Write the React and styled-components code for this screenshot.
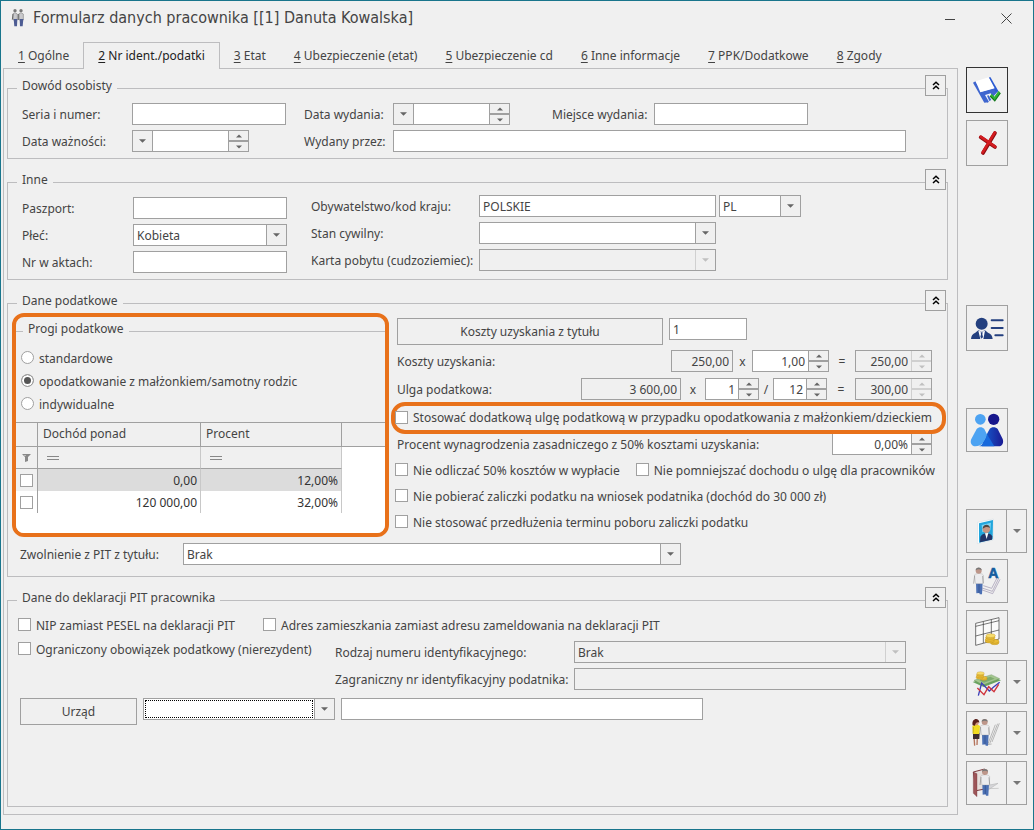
import React, { useState } from 'react';
import styled, { createGlobalStyle, css } from 'styled-components';

const GlobalStyle = createGlobalStyle`
  * {
    box-sizing: border-box;
  }

  body {
    margin: 0;
    background: #f0f0f0;
  }

  body, button, input, select {
    font-family: 'Noto Sans', 'Open Sans', sans-serif;
    font-size: 12px;
    line-height: 16px;
    color: #444;
  }
`;

const line = '#a0a0a0';
const softLine = '#bdbdbf';
const accent = '#e8711a';

const Window = styled.div`
  display: flex;
  flex-direction: column;
  min-height: 100vh;
  border: 1px solid #19758c;
  background: #f0f0f0;
`;

const TitleBar = styled.header`
  display: flex;
  align-items: center;
  height: 34px;
  padding: 0 21px 0 10px;
`;

const Title = styled.h1`
  flex: 1;
  margin: 0 0 0 8px;
  font-family: 'DejaVu Sans Condensed', 'Noto Sans', sans-serif;
  font-size: 16px;
  line-height: 20px;
  font-weight: 400;
`;

const WindowButton = styled.button`
  display: flex;
  width: 12px;
  height: 20px;
  margin-left: 44px;
  padding: 0;
  border: 0;
  background: none;
  align-items: center;
  justify-content: center;
`;

const Content = styled.div`
  display: flex;
  flex: 1;
  gap: 8px;
  padding: 7px 5px 14px 2px;
`;

const Main = styled.main`
  display: flex;
  flex: 1;
  flex-direction: column;
  min-width: 0;
`;

const TabBar = styled.nav`
  display: flex;
  padding-left: 1px;
  height: 27px;
  margin-bottom: -1px;
`;

const Tab = styled.button`
  position: relative;
  padding: 0 14px;
  border: 0;
  background: #f0f0f0;
  white-space: nowrap;

  ${props => props.$active ? css`
    color: #222;
    border: 1px solid ${softLine};
    border-bottom: 0;
  ` : css`
    height: 26px;
    padding-top: 2px;
  `}

  u {
    text-underline-offset: 2px;
  }
`;

const Panel = styled.div`
  display: flex;
  flex: 1;
  flex-direction: column;
  gap: 10px;
  padding: 6px 9px 7px 3px;
  border: 1px solid ${softLine};
`;

const GroupWrap = styled.section`
  position: relative;
  display: flex;
  flex: ${props => props.$grow ? 1 : 'none'};
  padding-top: 4px;
`;

const Fieldset = styled.fieldset`
  flex: 1;
  min-width: 0;
  margin: 0;
  padding: 0 0 6px;
  border: 1px solid ${softLine};
`;

const Legend = styled.legend`
  margin-left: 9px;
  padding: 0 5px 6px;
  line-height: 13px;
`;

const CollapseButton = styled.button`
  position: absolute;
  top: 0;
  right: 2px;
  display: flex;
  align-items: center;
  justify-content: center;
  width: 21px;
  height: 21px;
  padding: 0;
  border: 1px solid ${line};
  background: #f0f0f0;
`;

const Stack = styled.div`
  display: flex;
  flex-direction: column;
  gap: ${props => props.$gap || 5}px;
  padding: ${props => props.$pad || 0};
`;

const Row = styled.div`
  display: flex;
  align-items: ${props => props.$top ? 'flex-start' : 'center'};
  gap: ${props => props.$gap || 0}px;
  padding: ${props => props.$pad || 0};
`;

const Label = styled.label`
  flex: ${props => props.$w ? `0 0 ${props.$w}px` : '1'};
  padding-top: 2px;
  white-space: nowrap;
`;

const Sign = styled.span`
  width: ${props => props.$w}px;
  padding-top: 2px;
  text-align: center;
`;

const fieldBox = css`
  height: 22px;
  border: 1px solid ${line};
  border-radius: 0;
  background: ${props => props.disabled || props.readOnly || props.$off ? '#f0f0f0' : '#fff'};
  ${props => props.$w ? `width: ${props.$w}px;` : 'flex: 1; min-width: 0;'}
`;

const TextBox = styled.input`
  ${fieldBox}
  padding: 1px 3px 0;
  text-align: ${props => props.$right ? 'right' : 'left'};
`;

const ComboWrap = styled.div`
  ${fieldBox}
  position: relative;
  display: flex;
`;

const Select = styled.select`
  width: 100%;
  padding: 1px 24px 0 3px;
  border: 0;
  border-radius: 0;
  background: transparent;
  appearance: none;
  opacity: 1;
  color: #444;
  outline: 0;
`;

const FocusRect = styled.span`
  position: absolute;
  inset: 1px 21px 1px 1px;
  border: 1px dotted #000;
  pointer-events: none;
`;

const ComboMark = styled.span`
  position: absolute;
  top: 0;
  right: 0;
  bottom: 0;
  display: flex;
  align-items: center;
  justify-content: center;
  width: 20px;
  border-left: 1px solid ${props => props.$off ? '#d0d0d0' : line};
  background: #f0f0f0;
  color: ${props => props.$off ? '#c0c0c0' : '#666'};
  pointer-events: none;
`;

const SpinWrap = styled.div`
  ${fieldBox}
  display: flex;
`;

const SpinInput = styled.input`
  flex: 1;
  min-width: 0;
  padding: 1px 3px 0;
  border: 0;
  background: transparent;
  text-align: right;
`;

const DateDrop = styled.button`
  display: flex;
  align-items: center;
  justify-content: center;
  width: 20px;
  padding: 0;
  border: 0;
  border-right: 1px solid ${line};
  background: #f0f0f0;
  color: #666;
`;

const SpinButtons = styled.span`
  display: grid;
  grid-template-rows: 9px 11px;
  width: 20px;
  border-left: 1px solid ${props => props.$off ? '#d0d0d0' : line};
  color: ${props => props.$off ? '#c0c0c0' : '#666'};

  button {
    display: flex;
    align-items: center;
    justify-content: center;
    padding: 0;
    border: 0;
    background: #f0f0f0;
    color: inherit;
  }

  button + button {
    border-top: 2px solid ${props => props.$off ? '#d0d0d0' : line};
  }
`;

const PushButton = styled.button`
  width: ${props => props.$w}px;
  height: 27px;
  padding: 0;
  border: 1px solid ${line};
  background: #f0f0f0;
`;

const CheckLabel = styled.label`
  display: flex;
  align-items: center;
  gap: 5px;
  height: 17px;
  white-space: nowrap;
`;

const markBox = css`
  flex: none;
  width: 13px;
  height: 13px;
  border: 1px solid ${line};
  background: #fff;
  appearance: none;
`;

const CheckBox = styled.input.attrs({ type: 'checkbox' })`
  ${markBox}
  margin: ${props => props.$cell ? '0' : '0 0 2px'};

  &:checked {
    background: #666;
    box-shadow: inset 0 0 0 2px #fff;
  }
`;

const Radio = styled.input.attrs({ type: 'radio' })`
  ${markBox}
  margin: 0 0 2px;
  border-radius: 50%;

  &:checked {
    background: #555;
    box-shadow: inset 0 0 0 2px #fff;
  }
`;

const TaxGrid = styled.div`
  display: grid;
  grid-template-columns: 377px minmax(0, 1fr);
  gap: 2px;
  padding: 0 1px 0 4px;
`;

const ThresholdBox = styled.div`
  display: flex;
  flex-direction: column;
  height: 224px;
  border: 4px solid ${accent};
  border-radius: 12px;
  background: #f0f0f0;
  overflow: hidden;
`;

const ThresholdFieldset = styled.fieldset`
  display: flex;
  flex: 1;
  flex-direction: column;
  min-width: 0;
  margin: 5px 0 0;
  padding: 0;
  border: 0;
  border-top: 1px solid ${softLine};
`;

const ThresholdLegend = styled(Legend)`
  margin-left: 7px;
`;

const TableArea = styled.div`
  flex: 1;
  background: #fff;
`;

const Table = styled.table`
  width: 100%;
  table-layout: fixed;
  border-collapse: separate;
  border-spacing: 0;
  border-top: 1px solid ${line};

  th, td {
    height: 22px;
    padding: 1px 3px 0;
    border-right: 1px solid #c8c8c8;
    font-weight: 400;
    text-align: right;
  }

  th {
    height: 24px;
    padding: 0 5px 2px;
    border-right-color: ${line};
    border-bottom: 1px solid ${line};
    background: #f0f0f0;
    text-align: left;
  }

  th:first-child, td:first-child {
    padding: 0 4px;
    border-right-color: ${line};
    text-align: left;
  }

  th:last-child, td:last-child {
    border-right: 0;
  }

  input, svg {
    display: block;
  }
`;

const FilterRow = styled.tr`
  td {
    height: 22px;
    padding-left: 9px;
    border-bottom: 1px solid ${line};
    background: #f0f0f0;
  }

  td:first-child {
    padding-left: 6px;
  }

  td:last-child {
    border-bottom: 0;
    background: #fff;
  }
`;

const DataRow = styled.tr`
  td {
    background: ${props => props.$selected ? '#dcdcdc' : '#fff'};
    color: #333;
  }

  td:first-child {
    background: ${props => props.$selected ? '#f0f0f0' : '#fff'};
  }

  td:last-child {
    background: #fff;
  }
`;

const ReliefBox = styled.div`
  position: relative;
  z-index: 1;
  display: flex;
  align-items: center;
  height: 32px;
  margin-top: 2px;
  border: 4px solid ${accent};
  border-radius: 14px;
`;

const Under = styled(Row)`
  margin-top: -1px;
`;

const DeclarationGrid = styled.div`
  display: grid;
  grid-template-columns: 307px minmax(0, 1fr);
  gap: 10px;
  padding: 0 41px 0 10px;
`;

const Indent = styled.span`
  display: block;
  padding-left: 55px;
`;

const Side = styled.aside`
  display: flex;
  flex-direction: column;
  width: 62px;
  padding: 25px 0 10px;
`;

const SideGroup = styled.div`
  display: flex;
  flex-direction: column;
  gap: 7px;
  margin-top: ${props => props.$top || 0}px;
  ${props => props.$spread && 'flex: 1; gap: 0; justify-content: space-between;'}
`;

const SplitButton = styled.div`
  display: flex;
`;

const ToolButton = styled.button`
  width: ${props => props.$split ? 41 : 42}px;
  height: ${props => props.$tall ? 46 : 44}px;
  padding: 0;
  border: 1px solid ${props => props.$primary ? '#333' : line};
  background: #f0f0f0;

  svg {
    display: block;
    width: 40px;
    height: 100%;
  }
`;

const ToolDrop = styled.button`
  display: flex;
  align-items: center;
  justify-content: center;
  width: 21px;
  margin-left: -1px;
  padding: 0;
  border: 1px solid ${line};
  background: #f0f0f0;
  color: #777;
`;

function Arrow({ up, size = 7 }) {
  return (
    <svg width={size} height="4" viewBox="0 0 8 4" aria-hidden="true">
      <path d={up ? 'M0 4L4 0L8 4Z' : 'M0 0H8L4 4Z'} fill="currentColor" />
    </svg>
  );
}

function Combo({ w, value = '', label, id, disabled, focused }) {
  return (
    <ComboWrap $w={w} $off={disabled}>
      <Select id={id} aria-label={label} defaultValue={value} disabled={disabled}>
        <option value={value}>{value}</option>
      </Select>
      {focused && <FocusRect />}
      <ComboMark $off={disabled}><Arrow /></ComboMark>
    </ComboWrap>
  );
}

function Spin({ w, value = '', label, id, disabled, date }) {
  return (
    <SpinWrap $w={w} $off={disabled}>
      {date && <DateDrop type="button" aria-label="Kalendarz"><Arrow /></DateDrop>}
      <SpinInput id={id} aria-label={label} defaultValue={value} readOnly={disabled} />
      <SpinButtons $off={disabled}>
        <button type="button" aria-label="Więcej"><Arrow up size={6} /></button>
        <button type="button" aria-label="Mniej"><Arrow size={6} /></button>
      </SpinButtons>
    </SpinWrap>
  );
}

function Check({ children }) {
  return (
    <CheckLabel>
      <CheckBox />
      {children}
    </CheckLabel>
  );
}

function Group({ title, grow, children }) {
  return (
    <GroupWrap $grow={grow}>
      <Fieldset>
        <Legend>{title}</Legend>
        {children}
      </Fieldset>
      <CollapseButton type="button" aria-label={`Zwiń: ${title}`}>
        <svg width="8" height="9" viewBox="0 0 8 9" fill="none" stroke="#000" strokeWidth="1.5">
          <path d="M1 4L4 1.2L7 4M1 8L4 5.2L7 8" />
        </svg>
      </CollapseButton>
    </GroupWrap>
  );
}

function AppIcon() {
  return (
    <svg width="14" height="20" viewBox="0 0 42 60" aria-hidden="true">
      <g fill="#777">
        <circle cx="12" cy="8" r="5" />
        <circle cx="30" cy="8" r="5" />
      </g>
      <path d="M6 17l6-3 7 4v18H7zM24 17l6-3 7 4v18H25z" fill="#c9c9cc" stroke="#888" strokeWidth="2" />
      <path d="M8 33h11l-1 22h-8zM26 33h11l-2 22h-8z" fill="#4d5c93" />
      <path d="M6 18l-2 17M22 18v18" stroke="#666" strokeWidth="3" />
    </svg>
  );
}

function SaveIcon() {
  return (
    <svg viewBox="51 25 120 132">
      <path d="M69 69l7-4 39 63-12 1z" fill="#3f66cf" />
      <path d="M88 98l45-13 12 9-32 35z" fill="#3f66cf" />
      <path d="M116 54l5-2 24 42-8 3z" fill="#2b5bd2" />
      <path d="M77 65l39-12 18 33-43 12z" fill="#fff" />
      <path d="M105 106l17-5 11 14-17 10z" fill="#f3f5fb" />
      <path d="M111 108l5-1 8 14-6 3z" fill="#3f66cf" />
      <path d="M122 107l12 12 15-21" fill="none" stroke="#15791c" strokeWidth="9" />
      <path d="M123 105l11 11 14-20" fill="none" stroke="#2fb438" strokeWidth="6" />
    </svg>
  );
}

function CancelIcon() {
  return (
    <svg viewBox="51 184 120 132" fill="none" strokeLinecap="round">
      <path d="M92 233l43 29M135 220l-36 60" stroke="#8d0b10" strokeWidth="11" />
      <path d="M92 231l43 30M134 219l-36 59" stroke="#d31c20" strokeWidth="8" />
    </svg>
  );
}

function CardIcon() {
  return (
    <svg viewBox="51 33 120 132">
      <g fill="#24407f">
        <circle cx="95" cy="86" r="18" />
        <path d="M63 132c1-11 5-16 13-19l9-7 10 4 10-4 9 7c9 3 13 8 14 19z" />
      </g>
      <path d="M85 107l10 3 10-3-5 25h-9z" fill="#fff" />
      <path d="M92 112h6l-1 6 2 8-4 5-4-5 2-8z" fill="#24407f" />
      <path d="M125 76h33M125 99h33M136 121h22" stroke="#24407f" strokeWidth="6" strokeLinecap="round" />
    </svg>
  );
}

function PeopleIcon() {
  return (
    <svg viewBox="51 342 120 126">
      <defs>
        <linearGradient id="coat" x1="0" x2="1">
          <stop offset="0" stopColor="#1560d0" />
          <stop offset="1" stopColor="#1a1a94" />
        </linearGradient>
      </defs>
      <circle cx="91" cy="373" r="16" fill="#4da3f2" />
      <circle cx="131" cy="373" r="17" fill="#17178c" />
      <path d="M119 402c5-7 18-7 24 0l15 30c4 11-1 22-12 22H96l3-15z" fill="url(#coat)" />
      <path d="M80 402c6-7 17-7 23 0l9 18c-8 20-17 34-36 34-11 0-17-11-12-22z" fill="#4da3f2" />
      <path d="M111 418l22 36H88c12-5 19-20 23-36z" fill="#1769dc" />
    </svg>
  );
}

function PhotoIcon() {
  return (
    <svg viewBox="51 31 120 126">
      <path d="M83 68l47-10-1 63-47 11z" fill="#fff" stroke="#b9cbd4" strokeWidth="1" />
      <path d="M87 71l42-10-1 58-41 10z" fill="#22a6dc" />
      <path d="M95 76l28-7-2 23-24 6z" fill="#7fd4f2" />
      <path d="M90 128l1-17c6-8 11-10 18-9 9-2 14 1 18 8l-1 10z" fill="#233568" />
      <path d="M105 101l10-1-5 18z" fill="#fff" />
      <circle cx="109" cy="89" r="11" fill="#c79582" />
      <path d="M98 88c0-15 20-17 22-3-7-4-14-4-22 3z" fill="#544742" />
    </svg>
  );
}

function Man({ x, y }) {
  return (
    <g transform={`translate(${x} ${y})`}>
      <path d="M7 44h20l-2 36h-7l-1-4-9 1z" fill="#4b70b4" />
      <path d="M16 48v28" stroke="#304f88" strokeWidth="2" />
      <path d="M2 22c3-5 22-7 27 0l-1 26H6z" fill="#ececee" stroke="#999" strokeWidth="1" />
      <path d="M3 24L0 48M27 25l2 22" stroke="#888" strokeWidth="2" />
      <circle cx="15" cy="9" r="9" fill="#bd968a" />
      <path d="M6 8C6-3 24-3 24 8c-6-4-12-4-18 0z" fill="#777" />
    </g>
  );
}

function LetterIcon() {
  return (
    <svg viewBox="51 181 120 126">
      <path d="M96 265l31 10 20-41M94 270l34 12 22-43M100 258l25 8 17-33" fill="none" stroke="#9b93ad" strokeWidth="2" />
      <Man x={71} y={204} />
      <text x="115" y="234" fontFamily="Liberation Sans" fontSize="42" fontWeight="700" fill="#155d9e" stroke="#155d9e" strokeWidth="2">A</text>
    </svg>
  );
}

function Coins({ x, y }) {
  return (
    <g transform={`translate(${x} ${y})`} fill="#e9bd37" stroke="#a87b12" strokeWidth="1">
      <ellipse cx="29" cy="27" rx="13" ry="6" />
      <ellipse cx="29" cy="23" rx="13" ry="6" />
      <ellipse cx="14" cy="22" rx="14" ry="6" />
      <ellipse cx="15" cy="17" rx="14" ry="6" />
      <ellipse cx="16" cy="11" rx="14" ry="6" />
      <ellipse cx="17" cy="6" rx="14" ry="6" fill="#f8dc6b" />
    </g>
  );
}

function CalendarIcon() {
  return (
    <svg viewBox="51 334 120 126">
      <path d="M77 371l70-17v64l-70 19z" fill="#fafafa" stroke="#333" strokeWidth="2" />
      <path d="M77 380l70-17M77 409l70-18M100 366v64M124 360v64" stroke="#333" strokeWidth="2" />
      <Coins x={105} y={402} />
    </svg>
  );
}

function FinanceIcon() {
  return (
    <svg viewBox="51 19 120 126">
      <path d="M68 82l56-18 29 13-52 20z" fill="#69a35f" />
      <path d="M72 77l52-17 25 12-50 19z" fill="#a4c68f" stroke="#58874e" strokeWidth="1" />
      <path d="M88 77l33-11 13 6-32 12z" fill="#7eac6e" />
      <g transform="translate(78 51) scale(0.8)"><Coins x={0} y={0} /></g>
      <path d="M85 123l10-38 23 24 12-11 19-15" fill="none" stroke="#3c3fb8" strokeWidth="4" />
      <path d="M82 100l20 20 14-24 16 15 14-22" fill="none" stroke="#d0333b" strokeWidth="4" />
    </svg>
  );
}

function CoupleIcon() {
  return (
    <svg viewBox="51 172 120 126">
      <path d="M119 267l24-60M113 270l23-60M126 262l22-56M112 270l13-2" stroke="#9a9a9a" strokeWidth="2" />
      <path d="M72 246l2 27M82 246l-1 25" stroke="#b5745c" strokeWidth="4" />
      <path d="M69 235h20l-1 18H69z" fill="#3c2b30" />
      <path d="M67 214c6-5 18-5 23 0l-2 24H69z" fill="#f1db21" />
      <path d="M70 217l-1 20" stroke="#a99417" strokeWidth="2" />
      <circle cx="78" cy="204" r="8" fill="#d49a80" />
      <path d="M68 212c-5-23 20-25 20-8-8-3-12 2-13 9z" fill="#5b211c" />
      <Man x={89} y={193} />
    </svg>
  );
}

function ExitIcon() {
  return (
    <svg viewBox="51 322 120 126">
      <path d="M100 395l44-9-42 28zM110 402l36-1" fill="#d5d5d8" stroke="#bbb" strokeWidth="2" />
      <path d="M70 352l34-9v60l-25 5z" fill="#e6dfdc" stroke="#7d3a3e" strokeWidth="3" />
      <path d="M70 352l11 5v69l-11-10z" fill="#9d5558" stroke="#6d2f33" strokeWidth="1" />
      <Man x={90} y={343} />
    </svg>
  );
}

const tabs = [
  'Ogólne',
  'Nr ident./podatki',
  'Etat',
  'Ubezpieczenie (etat)',
  'Ubezpieczenie cd',
  'Inne informacje',
  'PPK/Dodatkowe',
  'Zgody',
];

const thresholds = ['standardowe', 'opodatkowanie z małżonkiem/samotny rodzic', 'indywidualne'];

const rates = [
  { income: '0,00', percent: '12,00%' },
  { income: '120 000,00', percent: '32,00%' },
];

const tools = [
  { name: 'Zdjęcie', Icon: PhotoIcon, split: true },
  { name: 'Atrybuty', Icon: LetterIcon },
  { name: 'Kalendarz', Icon: CalendarIcon },
  { name: 'Wypłaty', Icon: FinanceIcon, split: true },
  { name: 'Rodzina', Icon: CoupleIcon, split: true },
  { name: 'Nieobecności', Icon: ExitIcon, split: true },
];

function IdentityGroup() {
  return (
    <Group title="Dowód osobisty">
      <Stack $pad="5px 41px 0 14px">
        <Row>
          <Label $w={110} htmlFor="series">Seria i numer:</Label>
          <TextBox $w={154} id="series" />
          <Row $pad="0 0 0 18px">
            <Label $w={89} htmlFor="issued">Data wydania:</Label>
            <Spin w={117} id="issued" date />
          </Row>
          <Row $pad="0 0 0 42px">
            <Label $w={102} htmlFor="place">Miejsce wydania:</Label>
            <TextBox $w={154} id="place" />
          </Row>
        </Row>
        <Row>
          <Label $w={110} htmlFor="valid">Data ważności:</Label>
          <Spin w={117} id="valid" date />
          <Label $w={144} htmlFor="issuer"><Indent>Wydany przez:</Indent></Label>
          <TextBox id="issuer" />
        </Row>
      </Stack>
    </Group>
  );
}

function OtherGroup() {
  return (
    <Group title="Inne">
      <Row $gap={24} $pad="0 0 0 14px">
        <Stack $pad="5px 0 0">
          <Row>
            <Label $w={111} htmlFor="passport">Paszport:</Label>
            <TextBox $w={154} id="passport" />
          </Row>
          <Row>
            <Label $w={111} htmlFor="sex">Płeć:</Label>
            <Combo w={154} id="sex" value="Kobieta" />
          </Row>
          <Row>
            <Label $w={111} htmlFor="file">Nr w aktach:</Label>
            <TextBox $w={154} id="file" />
          </Row>
        </Stack>
        <Stack $pad="1px 0 0">
          <Row>
            <Label $w={168} htmlFor="citizen">Obywatelstwo/kod kraju:</Label>
            <Row $gap={3}>
              <TextBox $w={237} id="citizen" defaultValue="POLSKIE" />
              <Combo w={82} label="Kod kraju" value="PL" />
            </Row>
          </Row>
          <Row>
            <Label $w={168} htmlFor="marital">Stan cywilny:</Label>
            <Combo w={237} id="marital" />
          </Row>
          <Row>
            <Label $w={168} htmlFor="stay">Karta pobytu (cudzoziemiec):</Label>
            <Combo w={237} id="stay" disabled />
          </Row>
        </Stack>
      </Row>
    </Group>
  );
}

function EqualsMark() {
  return (
    <svg width="12" height="5" viewBox="0 0 12 5" aria-hidden="true">
      <path d="M0 0.5H12M0 3.5H12" stroke="#888" />
    </svg>
  );
}

function Thresholds() {
  const [selected, setSelected] = useState(1);

  return (
    <ThresholdBox>
      <ThresholdFieldset>
        <ThresholdLegend>Progi podatkowe</ThresholdLegend>
        <Stack $gap={6} $pad="9px 5px">
          {thresholds.map((name, i) => (
            <CheckLabel key={name}>
              <Radio name="threshold" checked={selected === i} onChange={() => setSelected(i)} />
              {name}
            </CheckLabel>
          ))}
        </Stack>
        <TableArea>
          <Table>
            <colgroup>
              <col width="22" />
              <col width="163" />
              <col width="141" />
              <col />
            </colgroup>
            <thead>
              <tr>
                <th aria-label="Wybór" />
                <th>Dochód ponad</th>
                <th>Procent</th>
                <th aria-label="Puste" />
              </tr>
            </thead>
            <tbody>
              <FilterRow>
                <td>
                  <svg width="9" height="9" viewBox="0 0 9 9" aria-hidden="true">
                    <path d="M0 1H9L6 4V8L3 9V4Z" fill="#888" />
                    <path d="M2 2H4L3 3Z" fill="#f0f0f0" />
                  </svg>
                </td>
                <td><EqualsMark /></td>
                <td><EqualsMark /></td>
                <td />
              </FilterRow>
              {rates.map((rate, i) => (
                <DataRow key={rate.income} $selected={i === 0}>
                  <td><CheckBox $cell aria-label={rate.income} /></td>
                  <td>{rate.income}</td>
                  <td>{rate.percent}</td>
                  <td />
                </DataRow>
              ))}
            </tbody>
          </Table>
        </TableArea>
      </ThresholdFieldset>
    </ThresholdBox>
  );
}

function TaxGroup() {
  return (
    <Group title="Dane podatkowe">
      <TaxGrid>
        <Thresholds />
        <div>
          <Row $top $gap={6} $pad="5px 0 5px 6px">
            <PushButton type="button" $w={266}>Koszty uzyskania z tytułu</PushButton>
            <TextBox $w={78} aria-label="Koszty uzyskania z tytułu" defaultValue="1" />
          </Row>
          <Row $pad="0 14px 6px 6px">
            <Label htmlFor="costs">Koszty uzyskania:</Label>
            <TextBox $w={62} $right id="costs" readOnly defaultValue="250,00" />
            <Sign $w={19}>x</Sign>
            <Spin w={77} label="Mnożnik kosztów" value="1,00" />
            <Sign $w={26}>=</Sign>
            <Spin w={77} label="Koszty razem" value="250,00" disabled />
          </Row>
          <Row $pad="0 14px 0 6px">
            <Label htmlFor="relief">Ulga podatkowa:</Label>
            <TextBox $w={100} $right id="relief" readOnly defaultValue="3 600,00" />
            <Sign $w={24}>x</Sign>
            <Spin w={54} label="Licznik ulgi" value="1" />
            <Sign $w={14}>/</Sign>
            <Spin w={54} label="Mianownik ulgi" value="12" />
            <Sign $w={28}>=</Sign>
            <Spin w={77} label="Ulga razem" value="300,00" disabled />
          </Row>
          <ReliefBox>
            <Check>Stosować dodatkową ulgę podatkową w przypadku opodatkowania z małżonkiem/dzieckiem</Check>
          </ReliefBox>
          <Under $pad="0 14px 7px 6px">
            <Label htmlFor="share">Procent wynagrodzenia zasadniczego z 50% kosztami uzyskania:</Label>
            <Spin w={100} id="share" value="0,00%" />
          </Under>
          <Stack $gap={9} $pad="0 0 0 4px">
            <Row $gap={16}>
              <Check>Nie odliczać 50% kosztów w wypłacie</Check>
              <Check>Nie pomniejszać dochodu o ulgę dla pracowników</Check>
            </Row>
            <Check>Nie pobierać zaliczki podatku na wniosek podatnika (dochód do 30 000 zł)</Check>
            <Check>Nie stosować przedłużenia terminu poboru zaliczki podatku</Check>
          </Stack>
        </div>
      </TaxGrid>
      <Row $pad="6px 0 5px 12px">
        <Label $w={163} htmlFor="exempt">Zwolnienie z PIT z tytułu:</Label>
        <Combo w={498} id="exempt" value="Brak" />
      </Row>
    </Group>
  );
}

function DeclarationGroup() {
  return (
    <Group title="Dane do deklaracji PIT pracownika" grow>
      <Row $gap={28} $pad="7px 10px">
        <Check>NIP zamiast PESEL na deklaracji PIT</Check>
        <Check>Adres zamieszkania zamiast adresu zameldowania na deklaracji PIT</Check>
      </Row>
      <DeclarationGrid>
        <Check>Ograniczony obowiązek podatkowy (nierezydent)</Check>
        <Stack>
          <Row>
            <Label $w={239} htmlFor="idkind">Rodzaj numeru identyfikacyjnego:</Label>
            <Combo id="idkind" value="Brak" disabled />
          </Row>
          <Row>
            <Label $w={239} htmlFor="foreign">Zagraniczny nr identyfikacyjny podatnika:</Label>
            <TextBox id="foreign" disabled />
          </Row>
        </Stack>
      </DeclarationGrid>
      <Row $top $gap={6} $pad="8px 12px">
        <PushButton type="button" $w={117}>Urząd</PushButton>
        <Combo w={192} label="Urząd" focused />
        <TextBox $w={362} aria-label="Nazwa urzędu" />
      </Row>
    </Group>
  );
}

function App() {
  const [activeTab, setActiveTab] = useState(1);

  return (
    <Window>
      <GlobalStyle />
      <TitleBar>
        <AppIcon />
        <Title>Formularz danych pracownika [[1] Danuta Kowalska]</Title>
        <WindowButton type="button" aria-label="Minimalizuj">
          <svg width="10" height="11" viewBox="0 0 10 11"><path d="M0 6.5H10" stroke="#444" /></svg>
        </WindowButton>
        <WindowButton type="button" aria-label="Zamknij">
          <svg width="11" height="11" viewBox="0 0 11 11"><path d="M0.5 0.5L10.5 10.5M10.5 0.5L0.5 10.5" stroke="#444" /></svg>
        </WindowButton>
      </TitleBar>
      <Content>
        <Main>
          <TabBar>
            {tabs.map((name, i) => (
              <Tab key={name} type="button" $active={activeTab === i} onClick={() => setActiveTab(i)}>
                <u>{i + 1}</u> {name}
              </Tab>
            ))}
          </TabBar>
          <Panel>
            <IdentityGroup />
            <OtherGroup />
            <TaxGroup />
            <DeclarationGroup />
          </Panel>
        </Main>
        <Side>
          <SideGroup>
            <ToolButton type="button" aria-label="Zapisz" $tall $primary><SaveIcon /></ToolButton>
            <ToolButton type="button" aria-label="Anuluj" $tall><CancelIcon /></ToolButton>
          </SideGroup>
          <SideGroup $top={139}>
            <ToolButton type="button" aria-label="Karta pracownika" $tall><CardIcon /></ToolButton>
          </SideGroup>
          <SideGroup $top={57}>
            <ToolButton type="button" aria-label="Pracownicy"><PeopleIcon /></ToolButton>
          </SideGroup>
          <SideGroup $top={57} $spread>
            {tools.map(({ name, Icon, split }) => (
              <SplitButton key={name}>
                <ToolButton type="button" aria-label={name} $split={split}><Icon /></ToolButton>
                {split && (
                  <ToolDrop type="button" aria-label={`${name} – menu`}><Arrow size={8} /></ToolDrop>
                )}
              </SplitButton>
            ))}
          </SideGroup>
        </Side>
      </Content>
    </Window>
  );
}

export default App;
